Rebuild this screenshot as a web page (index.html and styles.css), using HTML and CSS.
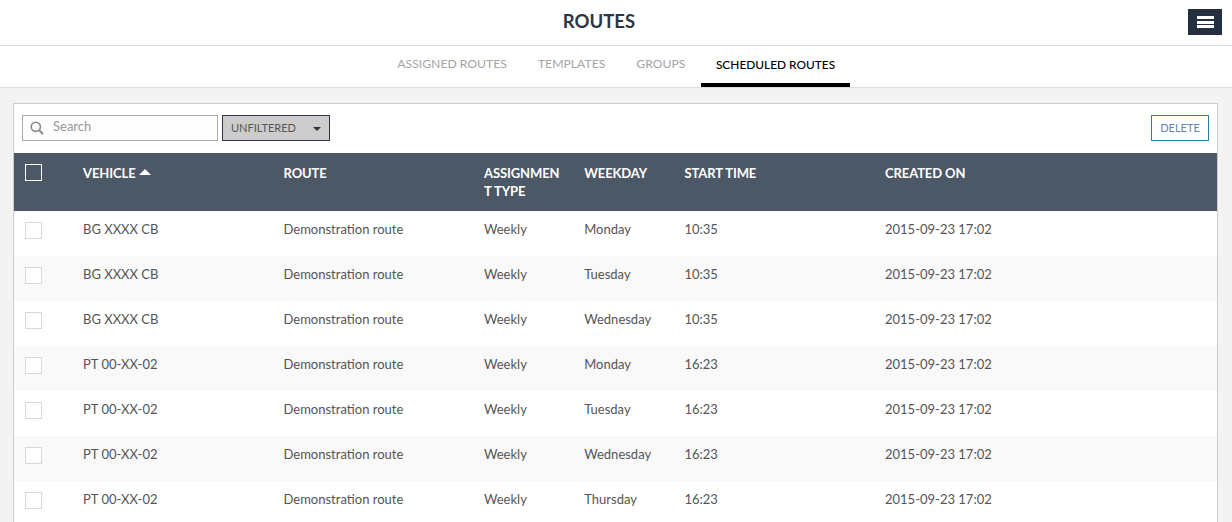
FILE: index.html
```html
<!DOCTYPE html>
<html lang="en">
<head>
<meta charset="UTF-8">
<title>Routes</title>
<link rel="stylesheet" href="styles.css">
</head>
<body>

<header class="top-bar">
    <h1>ROUTES</h1>
    <button class="menu-btn" type="button" aria-label="Menu"><span></span><span></span><span></span></button>
</header>

<nav class="tabs">
    <a href="#">ASSIGNED ROUTES</a>
    <a href="#">TEMPLATES</a>
    <a href="#">GROUPS</a>
    <a href="#" class="active">SCHEDULED ROUTES</a>
</nav>

<div class="panel">
    <div class="toolbar">
        <label class="search">
            <svg width="14" height="14" viewBox="0 0 14 14" fill="none" stroke="#888" stroke-width="1.6">
                <circle cx="5.8" cy="5.8" r="4.6"/>
                <path d="M9.2 9.2 L13 13" stroke-width="2"/>
            </svg>
            <input type="text" placeholder="Search">
        </label>
        <div class="filter">UNFILTERED<span class="caret"></span></div>
        <button class="delete-btn" type="button">DELETE</button>
    </div>

    <table>
        <colgroup>
            <col class="col-check">
            <col class="col-wide">
            <col class="col-wide">
            <col class="col-narrow">
            <col class="col-narrow">
            <col class="col-wide">
            <col>
        </colgroup>
        <thead>
            <tr>
                <th><span class="check head-check"></span></th>
                <th>VEHICLE <span class="sort-up"></span></th>
                <th>ROUTE</th>
                <th>ASSIGNMENT TYPE</th>
                <th>WEEKDAY</th>
                <th>START TIME</th>
                <th>CREATED ON</th>
            </tr>
        </thead>
        <tbody>
            <tr><td><span class="check"></span></td><td>BG XXXX CB</td><td>Demonstration route</td><td>Weekly</td><td>Monday</td><td>10:35</td><td>2015-09-23 17:02</td></tr>
            <tr><td><span class="check"></span></td><td>BG XXXX CB</td><td>Demonstration route</td><td>Weekly</td><td>Tuesday</td><td>10:35</td><td>2015-09-23 17:02</td></tr>
            <tr><td><span class="check"></span></td><td>BG XXXX CB</td><td>Demonstration route</td><td>Weekly</td><td>Wednesday</td><td>10:35</td><td>2015-09-23 17:02</td></tr>
            <tr><td><span class="check"></span></td><td>PT 00-XX-02</td><td>Demonstration route</td><td>Weekly</td><td>Monday</td><td>16:23</td><td>2015-09-23 17:02</td></tr>
            <tr><td><span class="check"></span></td><td>PT 00-XX-02</td><td>Demonstration route</td><td>Weekly</td><td>Tuesday</td><td>16:23</td><td>2015-09-23 17:02</td></tr>
            <tr><td><span class="check"></span></td><td>PT 00-XX-02</td><td>Demonstration route</td><td>Weekly</td><td>Wednesday</td><td>16:23</td><td>2015-09-23 17:02</td></tr>
            <tr><td><span class="check"></span></td><td>PT 00-XX-02</td><td>Demonstration route</td><td>Weekly</td><td>Thursday</td><td>16:23</td><td>2015-09-23 17:02</td></tr>
        </tbody>
    </table>
</div>

</body>
</html>
```

FILE: styles.css
```css
html {
    height: 100%;
    overflow: hidden;
}
body {
    margin: 0;
    background-color: #f3f3f3;
    font-family: Lato, Arial, sans-serif;
    font-size: 13px;
    color: #555;
}
.top-bar {
    display: flex;
    align-items: center;
    justify-content: center;
    height: 42px;
    padding: 0 34px 3px 0;
    background-color: #fff;
    border-bottom: 1px solid #ddd;
    position: relative;
}
.top-bar h1 {
    margin: 0;
    font-size: 18.5px;
    font-weight: 700;
    color: #2b3645;
}
.menu-btn {
    position: absolute;
    top: 9px;
    right: 10px;
    display: flex;
    flex-direction: column;
    justify-content: center;
    gap: 1.5px;
    width: 34px;
    height: 26px;
    padding: 0 8.5px;
    border: 0;
    background-color: #242f40;
}
.menu-btn span {
    display: block;
    height: 3px;
    background-color: #fff;
}
.tabs {
    display: flex;
    justify-content: center;
    height: 41px;
    background-color: #fff;
    border-bottom: 1px solid #ddd;
}
.tabs a {
    padding: 10px 15.5px 0;
    font-size: 12.2px;
    color: #a5a5a5;
    text-decoration: none;
    box-sizing: border-box;
}
.tabs a.active {
    padding: 11px 15px 0;
    font-weight: 500;
    font-size: 11.9px;
    color: #000;
    border-bottom: 4px solid #000;
    height: 41px;
}
.panel {
    margin: 15px 14px 0 13px;
    background-color: #fff;
    border: 1px solid #ccc;
    border-bottom: 0;
}
.toolbar {
    display: flex;
    align-items: flex-start;
    gap: 4px;
    height: 49px;
    padding: 11px 8px 0 8px;
    box-sizing: border-box;
}
.search {
    display: flex;
    align-items: center;
    gap: 9px;
    width: 196px;
    height: 26px;
    padding-left: 7px;
    border: 1px solid #aaa;
    box-sizing: border-box;
    background-color: #fdfdfd;
}
.search input {
    flex: 1;
    min-width: 0;
    padding: 0 0 5px;
    border: 0;
    outline: 0;
    background: transparent;
    font-family: inherit;
    font-size: 13px;
}
.search input::placeholder {
    color: #999;
}
.filter {
    display: flex;
    align-items: center;
    width: 108px;
    height: 26px;
    padding: 0 0 1px 8px;
    border: 1px solid #2b3645;
    box-sizing: border-box;
    background-color: #ccc;
    font-size: 11px;
    color: #555;
}
.caret {
    margin: 2px 0 0 17px;
    border-top: 4px solid #333;
    border-left: 4px solid transparent;
    border-right: 4px solid transparent;
}
.delete-btn {
    width: 58px;
    height: 26px;
    margin-left: auto;
    padding: 0 0 2px;
    border: 1px solid #2a7fa5;
    background-color: #fff;
    font-family: inherit;
    font-size: 11px;
    color: #5f86b3;
}
table {
    width: 100%;
    table-layout: fixed;
    border-collapse: collapse;
}
.col-check {
    width: 57px;
}
.col-wide {
    width: 200.5px;
}
.col-narrow {
    width: 100.25px;
}
th {
    height: 58px;
    padding: 11px 12px 0;
    box-sizing: border-box;
    background-color: #4c5866;
    color: #fff;
    font-size: 13px;
    font-weight: 700;
    line-height: 18px;
    letter-spacing: -0.1px;
    text-align: left;
    vertical-align: top;
    word-break: break-all;
}
td {
    height: 45px;
    padding: 9px 12px 0;
    box-sizing: border-box;
    font-size: 13px;
    line-height: 18px;
    color: #555;
    vertical-align: top;
}
th:first-child,
td:first-child {
    padding-left: 11px;
}
tbody tr:nth-child(even) td {
    background-color: #f9f9f9;
}
.check {
    display: block;
    width: 17px;
    height: 17px;
    border: 1px solid #d8d8d8;
    box-sizing: border-box;
    background-color: #fff;
}
td .check {
    margin-top: 2px;
}
.head-check {
    border-color: #fff;
    background-color: transparent;
}
.sort-up {
    display: inline-block;
    vertical-align: 3px;
    border-bottom: 6px solid #fff;
    border-left: 6px solid transparent;
    border-right: 6px solid transparent;
}
```
